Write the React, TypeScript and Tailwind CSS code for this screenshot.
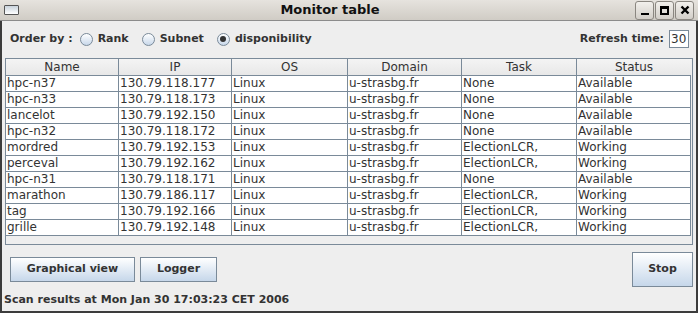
import { type ReactNode } from "react";

const rows = [
  ["hpc-n37", "130.79.118.177", "Linux", "u-strasbg.fr", "None", "Available"],
  ["hpc-n33", "130.79.118.173", "Linux", "u-strasbg.fr", "None", "Available"],
  ["lancelot", "130.79.192.150", "Linux", "u-strasbg.fr", "None", "Available"],
  ["hpc-n32", "130.79.118.172", "Linux", "u-strasbg.fr", "None", "Available"],
  ["mordred", "130.79.192.153", "Linux", "u-strasbg.fr", "ElectionLCR,", "Working"],
  ["perceval", "130.79.192.162", "Linux", "u-strasbg.fr", "ElectionLCR,", "Working"],
  ["hpc-n31", "130.79.118.171", "Linux", "u-strasbg.fr", "None", "Available"],
  ["marathon", "130.79.186.117", "Linux", "u-strasbg.fr", "ElectionLCR,", "Working"],
  ["tag", "130.79.192.166", "Linux", "u-strasbg.fr", "ElectionLCR,", "Working"],
  ["grille", "130.79.192.148", "Linux", "u-strasbg.fr", "ElectionLCR,", "Working"],
];

const columns = ["Name", "IP", "OS", "Domain", "Task", "Status"];

function Radio({ checked, label }: { checked?: boolean; label: string }) {
  return (
    <span className="flex items-center gap-[5px]">
      <span className="flex size-[13px] items-center justify-center rounded-full border border-[#7a8a99] bg-gradient-to-b from-white to-[#c8d8ea]">
        {checked && <span className="size-[6px] rounded-full bg-[#333]" />}
      </span>
      <span>{label}</span>
    </span>
  );
}

function Button({ children, className }: { children: ReactNode; className: string }) {
  return (
    <div
      className={`flex items-center justify-center border border-[#7a8a99] bg-gradient-to-b from-white to-[#c6d7ea] text-[11px] font-bold text-[#333] ${className}`}
    >
      {children}
    </div>
  );
}

function WinButton({ children }: { children: ReactNode }) {
  return (
    <div className="flex h-[19px] w-[19px] items-center justify-center rounded-[3px] border border-[#8a8680] bg-gradient-to-b from-[#f2f0ec] to-[#d2cec8]">
      {children}
    </div>
  );
}

export default function App() {
  return (
    <div
      className="flex h-[313px] w-[698px] flex-col overflow-hidden bg-[#eeeeee] text-[#333]"
      style={{ fontFamily: '"DejaVu Sans", sans-serif' }}
    >
      {/* Title bar */}
      <div className="flex h-[21px] items-center border-b border-[#8c8c8c] bg-gradient-to-b from-[#e6e3de] to-[#d0ccc5] px-[4px]">
        <div className="h-[10px] w-[15px] rounded-[1px] border border-[#555] bg-gradient-to-b from-[#c9d3dc] to-white" />
        <div className="flex-1 pl-[6px] text-center text-[13px] font-bold text-[#111]">Monitor table</div>
        <div className="flex gap-[1px]">
          <WinButton>
            <span className="mt-[8px] h-[2px] w-[8px] bg-black" />
          </WinButton>
          <WinButton>
            <span className="h-[9px] w-[9px] border-2 border-t-[3px] border-black" />
          </WinButton>
          <WinButton>
            <svg width="10" height="10" viewBox="0 0 10 10">
              <path d="M1.5 1.5 8.5 8.5M8.5 1.5 1.5 8.5" stroke="black" strokeWidth="2.4" />
            </svg>
          </WinButton>
        </div>
      </div>

      {/* Body */}
      <div className="flex flex-1 flex-col border-x-2 border-b-2 border-[#3c3c3c]">
        {/* Options row */}
        <div className="flex h-[35px] items-center justify-between pl-[8px] pr-[7px] pt-[1px] text-[11px] font-bold">
          <div className="flex items-center gap-[13px]">
            <span className="mr-[-6px]">Order by :</span>
            <Radio label="Rank" />
            <Radio label="Subnet" />
            <Radio checked label="disponibility" />
          </div>
          <div className="flex items-center gap-[5px]">
            <span>Refresh time:</span>
            <span className="flex h-[18px] w-[20px] items-center border border-[#7a8a99] bg-white pl-[1px] text-[12px] font-normal">
              30
            </span>
          </div>
        </div>

        {/* Table */}
        <div className="mx-[3px] mt-[2px] h-[187px] border border-[#7a8a99] bg-[#eeeeee] pr-[1px] text-[12px]">
          <div className="grid grid-cols-[113px_113px_116px_114px_115px_114px] border-b border-[#7a8a99]">
            {columns.map((c, i) => (
              <div
                key={c}
                className={`h-[16px] bg-gradient-to-b from-[#f4f4f4] to-[#e8e8e8] text-center leading-[16px] ${
                  i < 5 ? "border-r border-[#7a8a99]" : ""
                }`}
              >
                {c}
              </div>
            ))}
          </div>
          {rows.map((r, ri) => (
            <div
              key={ri}
              className="grid grid-cols-[113px_113px_116px_114px_115px_114px] border-b border-[#7a8a99] bg-white"
            >
              {r.map((v, i) => (
                <div key={i} className="h-[15px] truncate border-r border-[#7a8a99] pl-[1px] leading-[15px]">
                  {v}
                </div>
              ))}
            </div>
          ))}
        </div>

        {/* Buttons */}
        <div className="flex items-center pl-[8px] pr-[3px] pt-[7px]">
          <Button className="h-[25px] w-[125px]">Graphical view</Button>
          <Button className="ml-[5px] h-[25px] w-[77px]">Logger</Button>
          <div className="flex-1" />
          <Button className="h-[35px] w-[61px]">Stop</Button>
        </div>

        <div className="pl-[2px] pt-[5px] text-[11px] font-bold">Scan results at Mon Jan 30 17:03:23 CET 2006</div>
      </div>
    </div>
  );
}
